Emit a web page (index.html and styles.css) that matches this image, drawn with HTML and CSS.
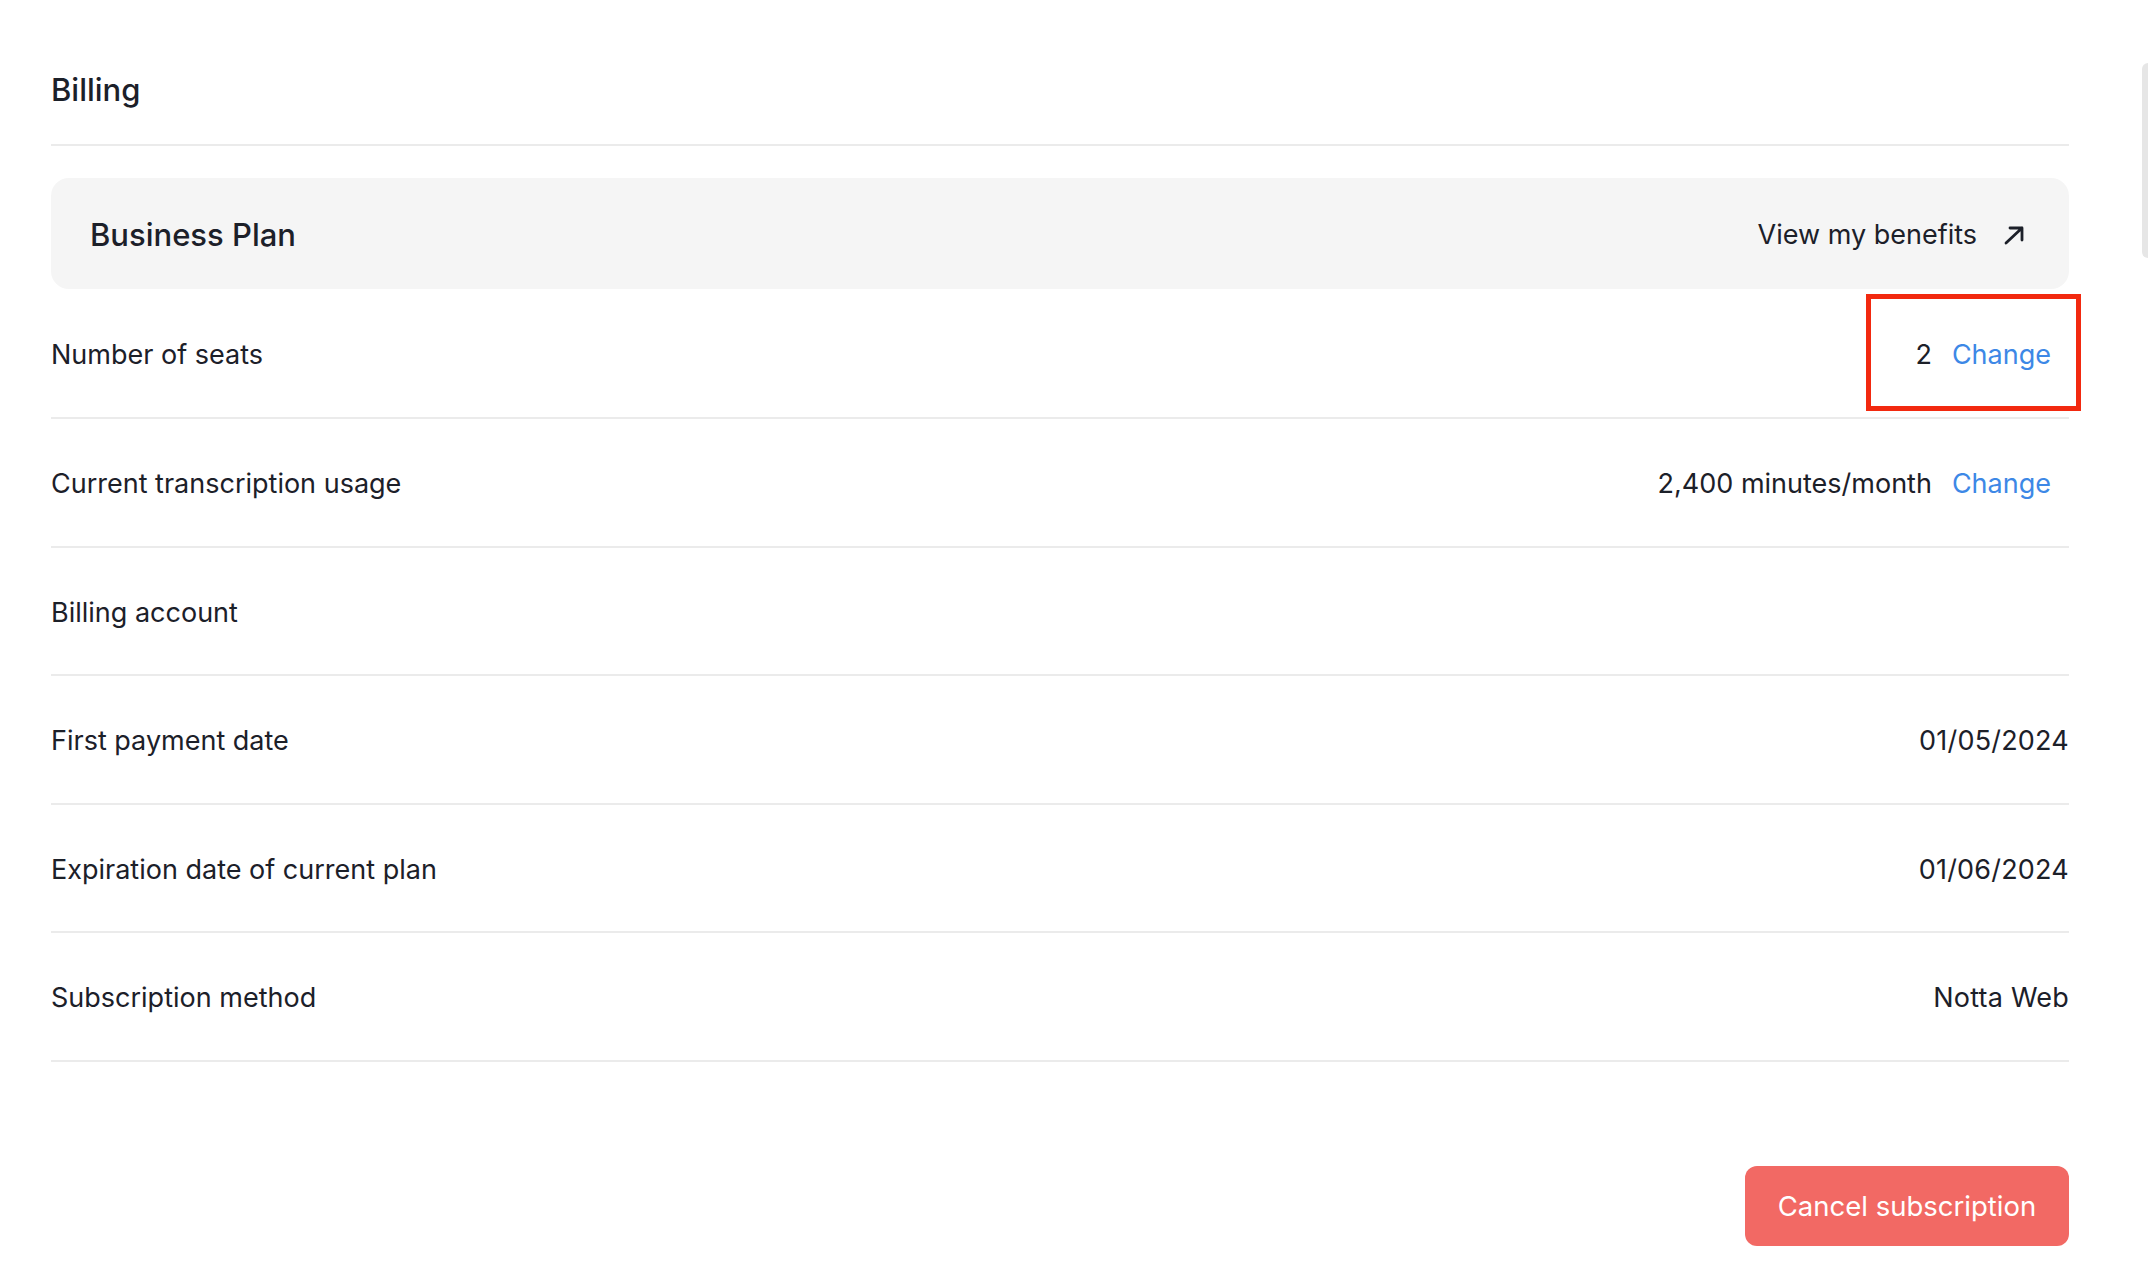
FILE: index.html
```html
<!DOCTYPE html>
<html lang="en">
<head>
<meta charset="utf-8">
<title>Billing</title>
<link rel="stylesheet" href="styles.css">
</head>
<body>
<div class="page">
  <h1 class="title">Billing</h1>
  <div class="plan">
    <span class="plan-name">Business Plan</span>
    <a class="benefits" href="#">View my benefits
      <svg class="arrow" viewBox="0 0 22 20" width="22" height="20" aria-hidden="true">
        <path d="M3 18 L19 3 M7 3 H19 V15" fill="none" stroke="#1c2029" stroke-width="2.8" stroke-linecap="round" stroke-linejoin="round"/>
      </svg>
    </a>
  </div>
  <div class="rows">
    <div class="row">
      <span class="label">Number of seats</span>
      <span class="value with-action">2 <a class="change" href="#">Change</a></span>
      <span class="highlight"></span>
    </div>
    <div class="row">
      <span class="label">Current transcription usage</span>
      <span class="value with-action">2,400 minutes/month <a class="change" href="#">Change</a></span>
    </div>
    <div class="row">
      <span class="label">Billing account</span>
    </div>
    <div class="row">
      <span class="label">First payment date</span>
      <span class="value">01/05/2024</span>
    </div>
    <div class="row">
      <span class="label">Expiration date of current plan</span>
      <span class="value">01/06/2024</span>
    </div>
    <div class="row">
      <span class="label">Subscription method</span>
      <span class="value">Notta Web</span>
    </div>
  </div>
  <div class="actions">
    <button class="cancel" type="button">Cancel subscription</button>
  </div>
</div>
<div class="scroll-thumb"></div>
</body>
</html>
```

FILE: styles.css
```css
html, body {
  margin: 0;
  padding: 0;
  background: #ffffff;
}
body {
  font-family: Inter, "Noto Sans", "Liberation Sans", sans-serif;
  color: #1c2029;
  position: relative;
  min-height: 1278px;
  overflow: hidden;
}
.page {
  padding: 0 79px 0 51px;
}
.title {
  margin: 0;
  padding: 70px 0 34px;
  font-size: 31px;
  line-height: 40px;
  font-weight: 500;
  border-bottom: 2px solid #ebebeb;
}
.plan {
  margin-top: 32px;
  height: 111px;
  box-sizing: border-box;
  background: #f5f5f5;
  border-radius: 18px;
  padding: 2px 44px 0 39px;
  display: flex;
  align-items: center;
  justify-content: space-between;
}
.plan-name {
  font-size: 31px;
  font-weight: 500;
}
.benefits {
  display: flex;
  align-items: center;
  gap: 26px;
  color: #1c2029;
  text-decoration: none;
  font-size: 27px;
}
.arrow {
  display: block;
}
.rows {
  display: flex;
  flex-direction: column;
}
.row {
  position: relative;
  height: 128.5px;
  box-sizing: border-box;
  padding-top: 3px;
  border-bottom: 2px solid #ebebeb;
  display: flex;
  align-items: center;
  justify-content: space-between;
  font-size: 27px;
}
.row:first-child {
  height: 130px;
}
.value {
  display: flex;
  align-items: center;
  letter-spacing: 0.2px;
}
.value.with-action {
  gap: 20px;
  padding-right: 18px;
  letter-spacing: 0;
}
.change {
  color: #3d88e6;
  text-decoration: none;
}
.highlight {
  position: absolute;
  left: 1815px;
  top: 5px;
  width: 215px;
  height: 117px;
  box-sizing: border-box;
  border: 5px solid #f2290f;
  pointer-events: none;
}
.actions {
  display: flex;
  justify-content: flex-end;
  margin-top: 104px;
}
.cancel {
  width: 324px;
  height: 80px;
  border: none;
  border-radius: 12px;
  background: #f26964;
  color: #ffffff;
  font-family: inherit;
  font-size: 27.5px;
  cursor: pointer;
}
.scroll-thumb {
  position: absolute;
  top: 63px;
  right: -6px;
  width: 12px;
  height: 195px;
  border-radius: 6px;
  background: #e6e6e6;
}
```
